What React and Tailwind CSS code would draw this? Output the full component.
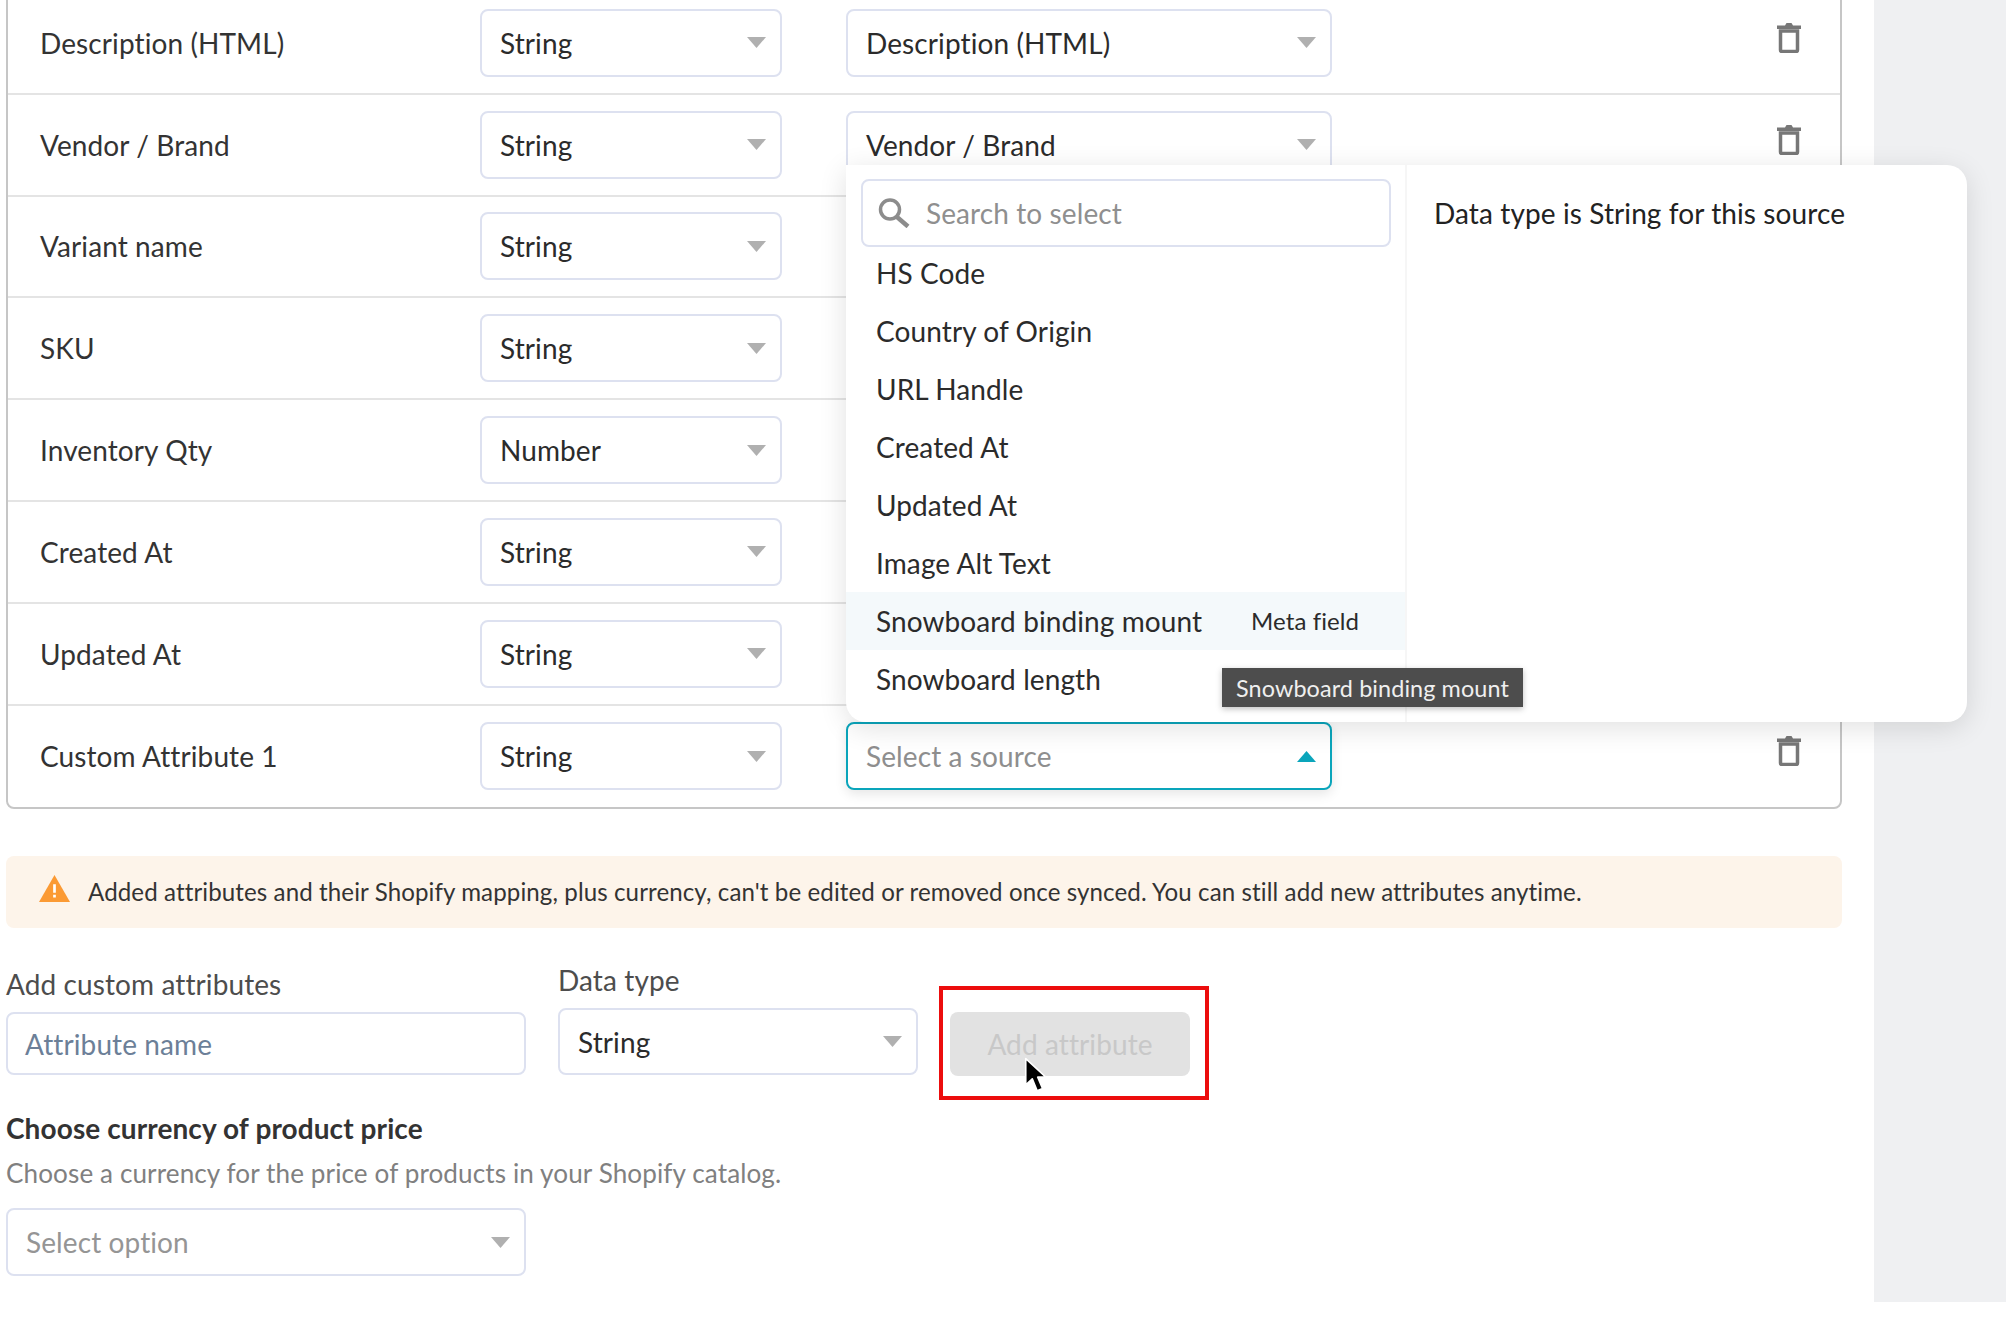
const rows = [
  ["Description (HTML)", "String", "Description (HTML)"],
  ["Vendor / Brand", "String", "Vendor / Brand"],
  ["Variant name", "String"],
  ["SKU", "String"],
  ["Inventory Qty", "Number"],
  ["Created At", "String"],
  ["Updated At", "String"],
];

const options = ["HS Code", "Country of Origin", "URL Handle", "Created At", "Updated At", "Image Alt Text"];

const Caret = ({ up }) => (
  <svg viewBox="0 0 19 11" className="w-[19px] h-[11px] shrink-0">
    {up ? <path d="M9.5 0 19 11H0z" fill="#0aa5bb" /> : <path d="M0 0h19L9.5 11z" fill="#b0b0b0" />}
  </svg>
);

const Select = ({ value, placeholder, className }) => (
  <div className={`flex items-center justify-between h-[68px] pl-[18px] pr-[14px] bg-white border-2 border-[#dde1f0] rounded-lg ${className}`}>
    {value ? <span className="text-[#2b2b2b]">{value}</span> : <span className="text-[#959595]">{placeholder}</span>}
    <Caret />
  </div>
);

const Trash = () => (
  <svg viewBox="0 0 24 30" className="w-[24px] h-[30px] shrink-0" fill="none">
    <path d="M8 2.500 9.500 0h5L16 2.500h8V6H0V2.500z" fill="#777" />
    <path d="M3.500 8h17v19a1.500 1.500 0 0 1-1.500 1.500H5A1.500 1.500 0 0 1 3.500 27z" stroke="#777" strokeWidth="3.500" />
  </svg>
);

const Row = ({ label, type, children }) => (
  <div className="flex items-center h-[101.8px] pl-[32px] pr-[39px] border-b-2 border-[#e4e4e4] last:border-b-0">
    <div className="w-[440px] text-[#333]">{label}</div>
    <Select value={type} className="w-[302px]" />
    <div className="ml-[64px] w-[486px]">{children}</div>
    <div className="ml-auto -mt-[10px]">
      <Trash />
    </div>
  </div>
);

const Popover = () => (
  <div className="absolute left-0 bottom-full z-10 flex w-[1121px] h-[557px] bg-white rounded-tr-[20px] rounded-b-[20px] shadow-[0_6px_28px_rgba(0,0,0,0.12)]">
    <div className="relative w-[559px] pt-[14px]">
      <div className="flex items-center h-[68px] ml-[15px] mr-[14px] pl-[15px] bg-white border-2 border-[#dde1f0] rounded-lg">
        <svg viewBox="0 0 32 30" className="w-[32px] h-[30px] shrink-0" fill="none" stroke="#8c8c8c">
          <circle cx="12" cy="11.500" r="9.500" strokeWidth="3.500" />
          <path d="m19 19 11 9.500" strokeWidth="4.500" />
        </svg>
        <span className="ml-[16px] text-[#8f8f8f]">Search to select</span>
      </div>
      <div className="-mt-[3px]">
        {options.map((o) => (
          <div key={o} className="flex items-center h-[58px] pl-[30px] text-[#2b2b2b]">{o}</div>
        ))}
        <div className="flex items-center h-[58px] pl-[30px] bg-[#f4f9fb] text-[#2b2b2b]">
          <span className="w-[375px]">Snowboard binding mount</span>
          <span className="text-[24px]">Meta field</span>
        </div>
        <div className="flex items-center h-[58px] pl-[30px] text-[#2b2b2b]">
          <span className="w-[375px]">Snowboard length</span>
          <span className="text-[24px]">Meta field</span>
        </div>
      </div>
      <div className="absolute left-[376px] top-[503px] flex items-center justify-center w-[301px] h-[39px] bg-[#4d4d4d] text-[#efefef] text-[23.4px] shadow-[0_2px_6px_rgba(0,0,0,0.25)] z-20 whitespace-nowrap">
        Snowboard binding mount
      </div>
    </div>
    <div className="flex-1 pl-[27px] pt-[31px] border-l-2 border-[#f6f6f6] text-[#222]">
      Data type is String for this source
    </div>
  </div>
);

export default function App() {
  return (
    <div className="flex items-start w-[2006px] h-[1340px] overflow-hidden bg-white text-[28px] leading-[34px] tracking-[0.1px] font-[family-name:Lato,sans-serif]">
      <div className="w-[1874px] pl-[6px]">
        {/* mapping table */}
        <div className="w-[1836px] -mt-[9px] border-2 border-[#c6c6c6] rounded-lg">
          {rows.map((r) => (
            <Row key={r[0]} label={r[0]} type={r[1]}>
              {r[2] && <Select value={r[2]} />}
            </Row>
          ))}
          <Row label="Custom Attribute 1" type="String">
            <div className="relative">
              <Popover />
              <div className="flex items-center justify-between h-[68px] pl-[18px] pr-[14px] bg-white border-2 border-[#0aa5bb] rounded-lg shadow-[0_4px_12px_rgba(0,0,0,0.1)]">
                <span className="text-[#8e8e8e]">Select a source</span>
                <Caret up />
              </div>
            </div>
          </Row>
        </div>

        {/* warning */}
        <div className="flex items-center w-[1836px] h-[72px] mt-[47px] pl-[33px] bg-[#fdf4ea] rounded-lg text-[24.1px] text-[#333]">
          <svg viewBox="0 0 30 26" className="w-[31px] h-[27px] shrink-0 -mt-[8px]">
            <path d="M15 0 30 26H0z" fill="#fb9a34" />
            <path d="M13.700 9h2.600v8h-2.600zM13.700 19h2.600v2.600h-2.600z" fill="#fff" />
          </svg>
          <span className="ml-[18px]">Added attributes and their Shopify mapping, plus currency, can't be edited or removed once synced. You can still add new attributes anytime.</span>
        </div>

        {/* add attribute */}
        <div className="flex items-end mt-[35px]">
          <div className="w-[520px]">
            <div className="mb-[11px] text-[#4d4d4d]">Add custom attributes</div>
            <div className="flex items-center h-[63px] pl-[17px] border-2 border-[#dde1f0] rounded-lg text-[#6c7f98]">Attribute name</div>
          </div>
          <div className="ml-[32px] w-[360px]">
            <div className="mb-[11px] text-[#4d4d4d]">Data type</div>
            <Select value="String" className="!h-[67px]" />
          </div>
          <div className="relative ml-[32px] -mb-[1px]">
            <button className="block w-[240px] h-[64px] bg-[#e2e2e2] rounded-lg text-[#c8c8c8]">Add attribute</button>
            <div className="absolute -left-[11px] -top-[26px] w-[270px] h-[114px] border-4 border-[#ec0d0d]" />
            <svg viewBox="0 0 20 34" className="absolute left-[74px] top-[45px] w-[22px] h-[37px]">
              <path d="M1.500 1.500v24l6-5.500 4.500 11 5-2-4.500-10.500H20z" fill="#000" stroke="#fff" strokeWidth="1.500" strokeLinejoin="round" />
            </svg>
          </div>
        </div>

        {/* currency */}
        <div className="mt-[36px] font-bold text-[#333]">Choose currency of product price</div>
        <div className="mt-[12px] h-[32px] text-[26.1px] leading-[32px] text-[#808080]">Choose a currency for the price of products in your Shopify catalog.</div>
        <Select placeholder="Select option" className="w-[520px] mt-[19px]" />
      </div>
      <div className="w-[132px] h-[1302px] bg-[#eff0f2]" />
    </div>
  );
}
